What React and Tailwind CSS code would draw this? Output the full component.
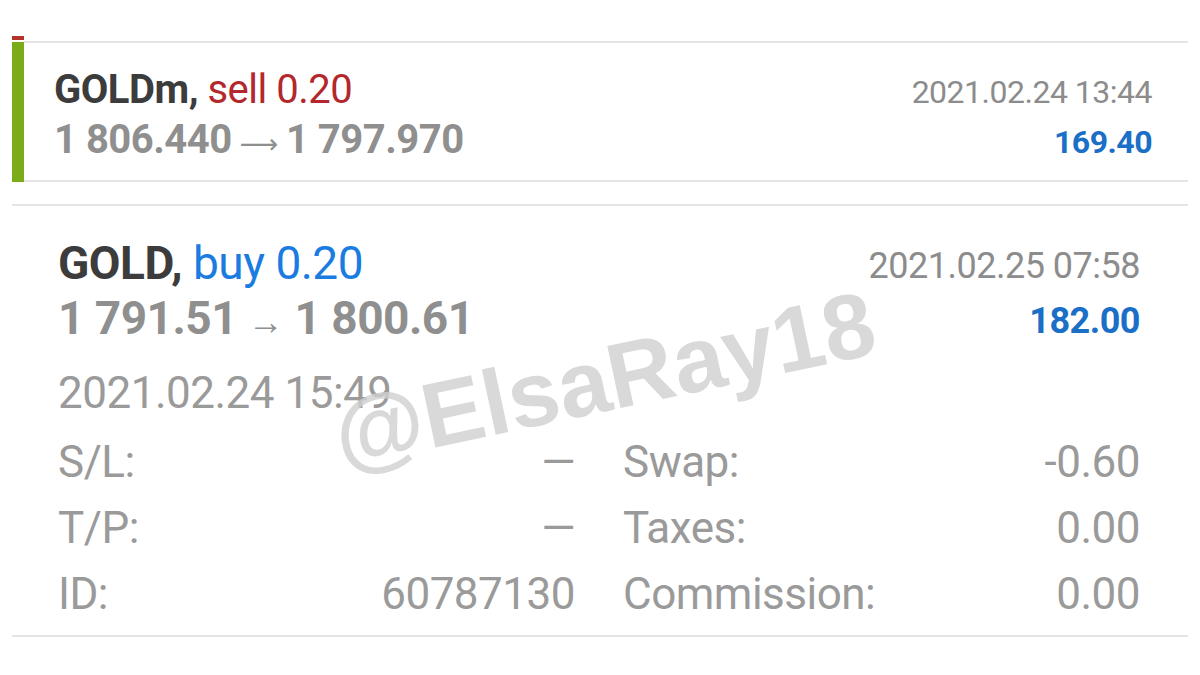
import React from 'react';

const rows = [
  ["S/L:", "—", "Swap:", "-0.60"],
  ["T/P:", "—", "Taxes:", "0.00"],
  ["ID:", "60787130", "Commission:", "0.00"],
];

const DealRow = ({ label, value }) => (
  <div className="flex items-baseline justify-between">
    <span>{label}</span>
    <span>{value}</span>
  </div>
);

export default function App() {
  return (
    <div className="w-[1200px] h-[675px] bg-white relative overflow-hidden font-['Roboto',sans-serif]">
      <div className="pt-[36px] px-[12px]">
        {/* closed sell position */}
        <div className="flex h-[146px]">
          <div className="w-[12px] flex flex-col">
            <div className="h-[4px] bg-[#b3322c]" />
            <div className="flex-1 mt-[2px] bg-[#7cab19]" />
          </div>
          <div className="flex-1 mt-[5px] border-t-2 border-b-2 border-[#e4e4e4] pl-[30px] pr-[36px] pt-[22px] flex justify-between">
            <div className="tracking-[-0.5px]">
              <div className="text-[40px] leading-[50px] font-bold text-[#3c3c3c]">
                GOLDm, <span className="font-normal text-[#b3282c]">sell 0.20</span>
              </div>
              <div className="text-[40px] leading-[50px] font-bold text-[#8f8f8f] flex items-baseline">
                <span>1 806.440</span>
                <span className="font-normal font-['DejaVu_Sans',sans-serif] text-[27px] mx-[8px]">⟶</span>
                <span>1 797.970</span>
              </div>
            </div>
            <div className="text-right tracking-[-0.5px]">
              <div className="text-[32px] leading-[50px] text-[#8c8c8c] pt-[2px]">2021.02.24 13:44</div>
              <div className="text-[32px] leading-[50px] font-bold text-[#1b6fc6]">169.40</div>
            </div>
          </div>
        </div>

        {/* expanded buy position */}
        <div className="mt-[22px] border-t-2 border-b-2 border-[#e4e4e4] pl-[46px] pr-[48px] pt-[30px] pb-[8px]">
          <div className="flex justify-between tracking-[-0.5px]">
            <div>
              <div className="text-[46px] leading-[55px] font-bold text-[#3c3c3c]">
                GOLD, <span className="font-normal text-[#1a7be0]">buy 0.20</span>
              </div>
              <div className="text-[46px] leading-[55px] font-bold text-[#8f8f8f]">
                1 791.51 <span className="font-normal text-[36px]">→</span> 1 800.61
              </div>
            </div>
            <div className="text-right pt-[3px]">
              <div className="text-[36px] leading-[55px] text-[#8c8c8c]">2021.02.25 07:58</div>
              <div className="text-[36px] leading-[55px] font-bold text-[#1b6fc6]">182.00</div>
            </div>
          </div>
          <div className="mt-[17px] text-[44px] leading-[66px] text-[#9a9a9a] tracking-[-0.5px]">
            <div className="leading-[52px] mb-[10px]">2021.02.24 15:49</div>
            <div className="grid grid-cols-2 gap-x-[48px]">
              {rows.map(([l1, v1, l2, v2]) => (
                <React.Fragment key={l1}>
                  <DealRow label={l1} value={v1} />
                  <DealRow label={l2} value={v2} />
                </React.Fragment>
              ))}
            </div>
          </div>
        </div>
      </div>

      {/* watermark */}
      <div className="absolute left-[335px] top-[390px] -rotate-12 origin-left text-[92px] leading-none font-bold text-[#d0d0d0]/80 font-['Liberation_Sans',sans-serif] pointer-events-none select-none whitespace-nowrap">
        @ElsaRay18
      </div>
    </div>
  );
}
